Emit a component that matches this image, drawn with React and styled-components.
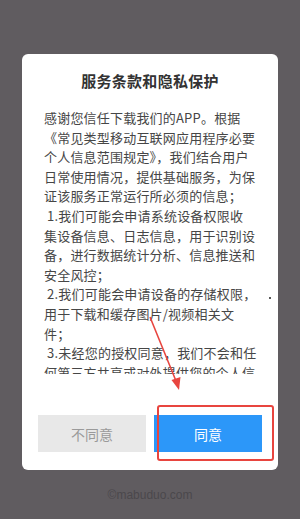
import React from "react";
import styled, { createGlobalStyle } from "styled-components";

const Global = createGlobalStyle`
  html, body { margin: 0; padding: 0; background: #605c60; }
  body { font-family: "Noto Sans CJK SC", "Liberation Sans", sans-serif; }
`;

const Page = styled.div`
  position: relative;
  width: 300px;
  height: 519px;
  background: #605c60;
  overflow: hidden;
  display: flex;
  flex-direction: column;
  align-items: center;
`;

const Dialog = styled.div`
  margin-top: 54px;
  width: 256px;
  height: 416px;
  background: #fff;
  border-radius: 6px;
  display: flex;
  flex-direction: column;
  box-sizing: border-box;
`;

const Title = styled.div`
  margin-top: 16px;
  height: 22px;
  line-height: 22px;
  text-align: center;
  font-size: 15px;
  font-weight: 700;
  color: #333;
  letter-spacing: 0.3px;
`;

const Body = styled.div`
  margin-top: 16px;
  height: 266px;
  overflow: hidden;
  padding: 0 14px 0 22px;
  font-size: 13px;
  line-height: 19.6px;
  letter-spacing: 0.2px;
  color: #464646;
  white-space: pre;
`;

const Buttons = styled.div`
  margin-top: auto;
  padding: 0 16px 18px;
  display: flex;
  gap: 8px;
`;

const Btn = styled.button`
  position: relative;
  width: 108px;
  height: 37px;
  border: none;
  border-radius: 0;
  font-family: inherit;
  font-size: 14px;
  background: ${(p) => (p.$primary ? "#2c97f9" : "#e8e8e8")};
  color: ${(p) => (p.$primary ? "#fff" : "#9a9a9a")};
  padding: 0;
`;

const Highlight = styled.div`
  position: absolute;
  left: 3px;
  top: -10px;
  width: 117px;
  height: 56px;
  box-sizing: border-box;
  border: 2px solid #e8453f;
  border-radius: 3px;
  pointer-events: none;
`;

const Watermark = styled.div`
  margin-top: 18px;
  font-family: "Liberation Sans", Arial, sans-serif;
  font-size: 12px;
  line-height: 14px;
  color: #4b484c;
`;

const Overlay = styled.svg`
  position: absolute;
  left: 0;
  top: 0;
  pointer-events: none;
`;

const Dot = styled.div`
  position: absolute;
  left: 269px;
  top: 297px;
  width: 2px;
  height: 2px;
  border-radius: 1px;
  background: #222;
`;

const text = `感谢您信任下载我们的APP。根据
《常见类型移动互联网应用程序必要
个人信息范围规定》，我们结合用户
日常使用情况，提供基础服务，为保
证该服务正常运行所必须的信息；
 1.我们可能会申请系统设备权限收
集设备信息、日志信息，用于识别设
备，进行数据统计分析、信息推送和
安全风控；
 2.我们可能会申请设备的存储权限，
用于下载和缓存图片/视频相关文
件；
 3.未经您的授权同意，我们不会和任
何第三方共享或对外提供您的个人信`;

export default function App() {
  return (
    <>
      <Global />
      <Page>
        <Dialog>
          <Title>服务条款和隐私保护</Title>
          <Body>{text}</Body>
          <Buttons>
            <Btn>不同意</Btn>
            <Btn $primary>
              同意
              <Highlight />
            </Btn>
          </Buttons>
        </Dialog>
        <Watermark>©mabuduo.com</Watermark>
        <Dot />
        <Overlay width="300" height="519" viewBox="0 0 300 519">
          <line x1="150" y1="317" x2="176" y2="381" stroke="#e8453f" strokeWidth="1.6" />
          <polygon points="179,390 171.5,380 180.5,377" fill="#e8453f" />
        </Overlay>
      </Page>
    </>
  );
}
